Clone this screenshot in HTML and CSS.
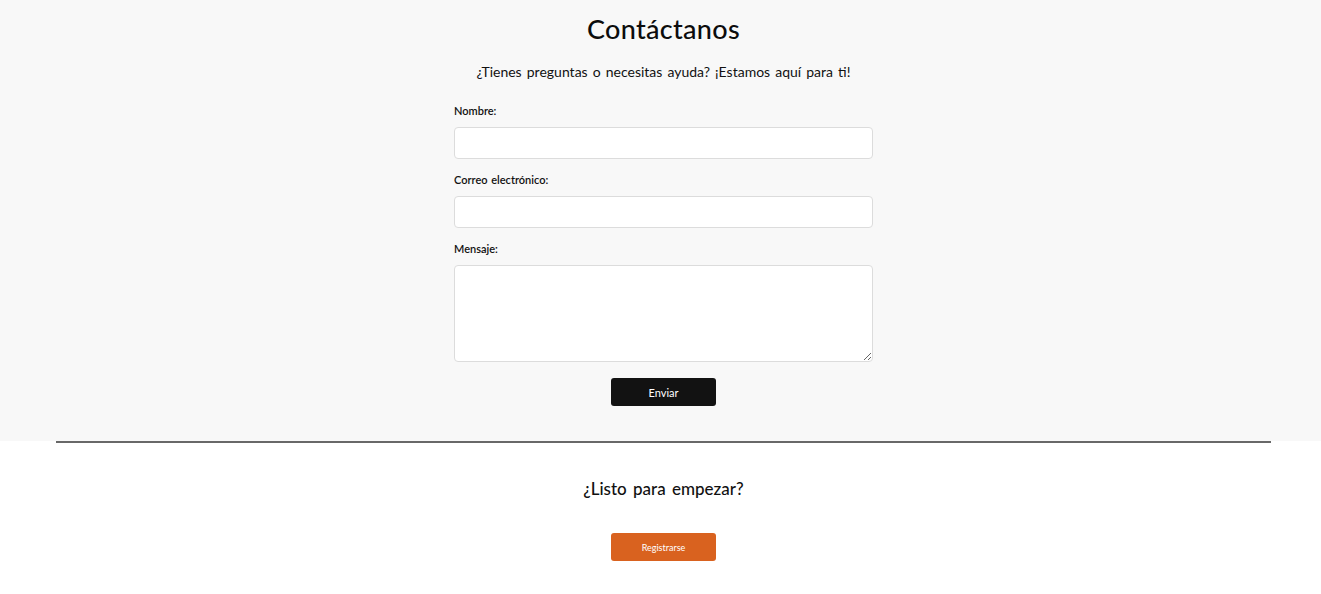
FILE: index.html
```html
<!DOCTYPE html>
<html lang="es">
<head>
<meta charset="utf-8">
<title>Contáctanos</title>
<link rel="stylesheet" href="styles.css">
</head>
<body>
<section class="contact">
  <div class="inner">
    <h2 class="title">Contáctanos</h2>
    <p class="lead">¿Tienes preguntas o necesitas ayuda? ¡Estamos aquí para ti!</p>
    <form class="form">
      <label class="label" for="nombre">Nombre:</label>
      <input class="field" id="nombre" type="text">
      <label class="label" for="correo">Correo electrónico:</label>
      <input class="field" id="correo" type="email">
      <label class="label" for="mensaje">Mensaje:</label>
      <textarea class="field area" id="mensaje"></textarea>
      <div class="actions"><button class="btn btn-dark" type="button">Enviar</button></div>
    </form>
  </div>
</section>
<div class="rule-wrap"><hr class="rule"></div>
<section class="cta">
  <h3 class="cta-title">¿Listo para empezar?</h3>
  <button class="btn btn-orange" type="button">Registrarse</button>
</section>
</body>
</html>
```
FILE: styles.css
```css
* { box-sizing: border-box; }
html, body { margin: 0; padding: 0; background: #fff; }
body {
  font-family: "Lato", "Open Sans", "Liberation Sans", sans-serif;
  color: #111;
}
.contact {
  background: #f8f8f8;
  padding: 12px 0 35px 6px;
}
.inner {
  width: 419px;
  margin: 0 auto;
  display: flex;
  flex-direction: column;
  align-items: center;
}
.title {
  margin: 0;
  font-size: 27px;
  line-height: 34px;
  font-weight: 500;
  letter-spacing: 0.3px;
  color: #0c0c0c;
}
.lead {
  margin: 16px 0 0;
  font-size: 14px;
  line-height: 20px;
  word-spacing: 1.5px;
  white-space: nowrap;
  color: #111;
}
.form {
  margin-top: 19px;
  width: 419px;
  display: flex;
  flex-direction: column;
}
.label {
  font-size: 11px;
  line-height: 20px;
  font-weight: 600;
  margin-bottom: 6px;
  word-spacing: 1px;
}
.field {
  display: block;
  width: 100%;
  height: 32px;
  border: 1px solid #dcdcdc;
  border-radius: 4px;
  background: #fff;
  margin: 0 0 11px;
  font: inherit;
}
.area {
  height: 97px;
  margin-bottom: 0;
  resize: vertical;
}
.actions {
  display: flex;
  justify-content: center;
  margin-top: 16px;
}
.btn {
  width: 105px;
  height: 28px;
  border: none;
  border-radius: 3px;
  color: #fff;
  font-family: inherit;
  cursor: pointer;
}
.btn-dark {
  background: #121212;
  font-size: 11px;
}
.rule-wrap { padding-left: 6px; }
.rule {
  margin: 0 50px;
  border: none;
  border-top: 2px solid #686868;
  height: 0;
}
.cta {
  padding-left: 6px;
  display: flex;
  flex-direction: column;
  align-items: center;
}
.cta-title {
  margin: 34px 0 0;
  font-size: 17px;
  line-height: 24px;
  font-weight: 500;
  word-spacing: 2px;
}
.btn-orange {
  margin-top: 32px;
  background: #d9621f;
  font-size: 9px;
}
```
